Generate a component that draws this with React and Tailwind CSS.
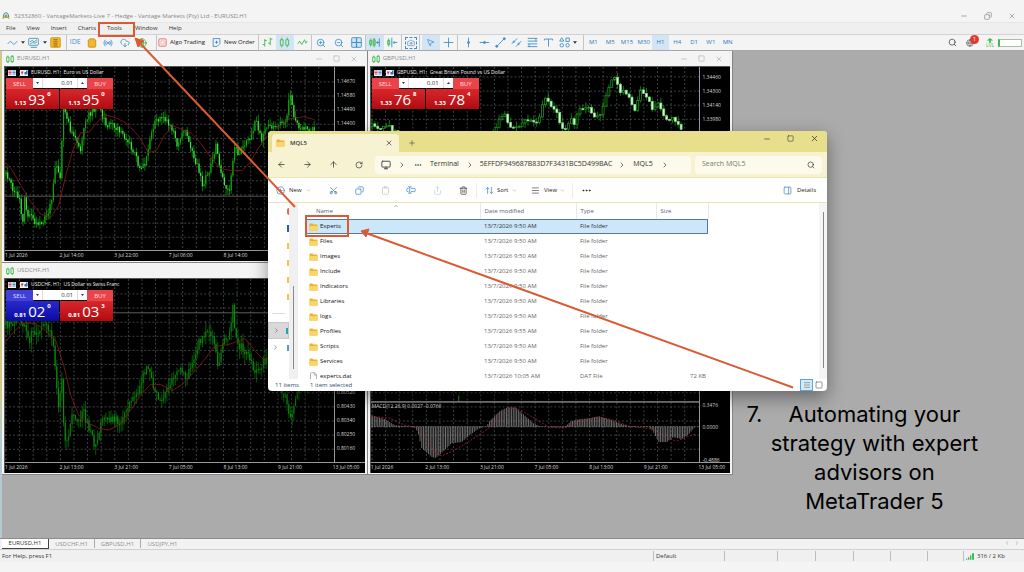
/**
 * Trading terminal desktop
 * Chart windows, a file explorer on top and the tutorial call-outs
 */

import {
  ArrowLeft, ArrowRight, ArrowUp, ArrowDownUp, Camera, ChevronDown, ChevronRight, ChevronUp, CirclePlus,
  Clipboard, CloudDownload, Copy, Ellipsis, File, Globe, Menu, Minus, Monitor, MousePointer2,
  PanelRight, Plus, Radio, RotateCw, Scissors, Search, Share, ShoppingBag, Square, TextCursorInput,
  Trash2, X, ZoomIn, ZoomOut,
} from 'lucide-react'

const T = {
  blue: '#3f8fcb',
  green: '#3fb950',
  grid: '#4f5358',
  ma: '#8e1a1a',
  orange: '#d95b33',
}

// Price tracks, in plot coordinates (330 x 184)
const EURUSD = {
  price: [[0, 108], [5, 115], [9, 124], [13, 130], [16, 140], [17, 168], [20, 128], [22, 146], [27, 152], [31, 156], [36, 158], [41, 150], [46, 139], [51, 95], [56, 116], [58, 40], [62, 48], [66, 68], [70, 70], [76, 84], [80, 54], [86, 46], [92, 38], [96, 44], [101, 58], [108, 59], [116, 64], [124, 74], [132, 92], [136, 102], [140, 98], [146, 69], [150, 56], [156, 53], [162, 54], [168, 64], [174, 80], [180, 60], [186, 79], [193, 100], [198, 118], [204, 108], [208, 90], [212, 80], [215, 99], [218, 112], [223, 124], [226, 122], [229, 90], [231, 74], [234, 90], [241, 75], [246, 76], [252, 50], [254, 64], [258, 74], [262, 62], [282, 54], [286, 26], [288, 38], [292, 58], [300, 62], [311, 63]],
  ma: [[0, 96], [6, 102], [16, 119], [26, 136], [36, 148], [46, 151], [54, 139], [61, 109], [68, 84], [76, 66], [84, 66], [92, 56], [100, 48], [111, 51], [121, 56], [134, 69], [144, 86], [152, 84], [160, 69], [168, 59], [176, 62], [186, 66], [196, 76], [206, 90], [216, 102], [226, 104], [238, 104], [246, 96], [254, 82], [264, 69], [286, 52], [300, 50], [311, 53]],
}

const GBPUSD = {
  price: [[0, 60], [5, 61], [9, 65], [15, 60], [21, 62], [29, 66], [40, 80], [70, 110], [110, 90], [124, 68], [129, 52], [135, 50], [141, 62], [147, 60], [153, 54], [161, 56], [169, 54], [173, 30], [177, 37], [185, 40], [189, 56], [195, 64], [201, 49], [203, 59], [209, 44], [215, 41], [221, 44], [227, 52], [233, 39], [237, 26], [240, 12], [244, 9], [247, 19], [253, 26], [259, 32], [265, 42], [271, 24], [277, 29], [283, 44], [287, 34], [293, 49], [299, 54], [304, 53], [312, 66]],
}

const USDCHF = {
  price: [[0, 47], [8, 43], [14, 36], [21, 50], [24, 66], [28, 49], [34, 56], [41, 46], [46, 58], [50, 78], [53, 128], [56, 110], [58, 85], [59, 160], [63, 164], [66, 142], [70, 138], [76, 138], [78, 127], [82, 145], [88, 157], [89, 172], [94, 152], [101, 142], [111, 140], [116, 150], [121, 134], [128, 122], [136, 107], [142, 86], [146, 98], [151, 116], [156, 123], [162, 109], [168, 100], [174, 90], [182, 97], [188, 87], [194, 66], [200, 56], [204, 48], [210, 66], [214, 86], [218, 68], [224, 58], [227, 46], [229, 24], [231, 56], [236, 67], [244, 77], [252, 97], [258, 86], [264, 76], [281, 118], [288, 141], [292, 122], [298, 112], [308, 100]],
  ma: [[0, 64], [8, 54], [18, 44], [31, 45], [41, 52], [51, 62], [59, 87], [66, 117], [74, 137], [84, 145], [94, 150], [104, 152], [114, 147], [126, 132], [136, 117], [146, 106], [156, 106], [168, 112], [178, 106], [191, 92], [201, 80], [210, 68], [224, 66], [241, 60], [251, 72], [258, 80], [266, 80]],
}

const MACD = {
  bars: [[0, 137], [14, 141], [24, 147], [34, 148], [44, 149], [47, 154], [51, 170], [61, 179], [65, 180], [74, 172], [81, 165], [91, 164], [99, 157], [109, 150], [116, 148], [119, 143], [129, 133], [137, 129], [145, 129], [153, 136], [163, 145], [169, 148], [184, 149], [194, 149], [201, 143], [209, 141], [219, 140], [229, 138], [239, 141], [249, 145], [259, 148], [279, 149], [283, 153], [289, 164], [297, 164], [303, 159], [312, 161], [319, 156], [325, 149]],
  signal: [[0, 138], [19, 140], [34, 147], [44, 149], [54, 159], [64, 174], [71, 178], [84, 172], [99, 163], [114, 153], [129, 141], [139, 130], [149, 131], [164, 140], [179, 149], [194, 150], [209, 143], [229, 139], [244, 142], [259, 148], [284, 151], [297, 160], [307, 163], [319, 158], [326, 156]],
}

const FILES = [
  ['Experts', '13/7/2026 9:50 AM', 'File folder', ''],
  ['Files', '13/7/2026 9:50 AM', 'File folder', ''],
  ['Images', '13/7/2026 9:50 AM', 'File folder', ''],
  ['Include', '13/7/2026 9:50 AM', 'File folder', ''],
  ['Indicators', '13/7/2026 9:50 AM', 'File folder', ''],
  ['Libraries', '13/7/2026 9:50 AM', 'File folder', ''],
  ['logs', '13/7/2026 9:50 AM', 'File folder', ''],
  ['Profiles', '13/7/2026 9:55 AM', 'File folder', ''],
  ['Scripts', '13/7/2026 9:50 AM', 'File folder', ''],
  ['Services', '13/7/2026 9:50 AM', 'File folder', ''],
  ['experts.dat', '13/7/2026 10:05 AM', 'DAT File', '72 KB'],
]

const DATES = ['1 Jul 2026', '2 Jul 13:00', '3 Jul 21:00', '7 Jul 05:00', '8 Jul 13:00', '9 Jul 21:00', '13 Jul 05:00']

function valueAt(points, x) {
  for (let i = 1; i < points.length; i++) {
    const [x0, y0] = points[i - 1]
    const [x1, y1] = points[i]
    if (x <= x1) return y0 + ((y1 - y0) * (x - x0)) / (x1 - x0)
  }
  return points[points.length - 1][1]
}

// Small seeded generator, so candles are the same on every render
function seeded(seed) {
  let s = seed
  return () => {
    s = (s * 16807) % 2147483647
    return s / 2147483647
  }
}

function makeCandles(points, step, seed, noise) {
  const rnd = seeded(seed)
  const end = points[points.length - 1][0]
  const out = []
  let open = points[0][1]
  for (let x = 1; x <= end; x += step) {
    const close = valueAt(points, x) + (rnd() - 0.5) * noise
    const top = Math.min(open, close)
    const bottom = Math.max(open, close)
    out.push({ x, top, bottom, high: top - rnd() * noise, low: bottom + rnd() * noise, up: close < open })
    open = close
  }
  return out
}

const toPoints = (list) => list.map((p) => p.join(',')).join(' ')

/* ---------- Charts ---------- */

function Grid({ offset = 15 }) {
  const cols = Array.from({ length: 24 }, (_, i) => 1 + i * 13.65)
  const rows = Array.from({ length: 13 }, (_, i) => offset + i * 14.2)
  return (
    <g stroke={T.grid} strokeWidth="0.8" strokeDasharray="2 2">
      {cols.map((x) => <line key={x} x1={x} x2={x} y1="0" y2="184" />)}
      {rows.map((y) => <line key={y} x1="0" x2="330" y1={y} y2={y} />)}
    </g>
  )
}

function ThinCandles({ points, seed, line, body, noise }) {
  return makeCandles(points, 1.7, seed, noise).map((c) => (
    <g key={c.x}>
      <line x1={c.x} x2={c.x} y1={c.high} y2={c.low} stroke={line} strokeWidth="0.7" />
      <rect x={c.x - 0.6} y={c.top} width="1.2" height={Math.max(1, c.bottom - c.top)} fill={c.up ? line : body} />
    </g>
  ))
}

function WideCandles({ points, seed }) {
  return makeCandles(points, 2.9, seed, 6).map((c) => (
    <g key={c.x} stroke="#1fa51f" strokeWidth="0.7">
      <line x1={c.x} x2={c.x} y1={c.high} y2={c.low} />
      <rect x={c.x - 1} y={c.top} width="2" height={Math.max(1, c.bottom - c.top)} fill={c.up ? '#000' : '#d9ffd9'} stroke={c.up ? '#1fa51f' : '#7fdc7f'} />
    </g>
  ))
}

function MacdPlot() {
  const xs = Array.from({ length: 192 }, (_, i) => i * 1.7)
  return (
    <g>
      <path d="M88 117v6" stroke="#157a15" strokeWidth="1.4" />
      <rect x="0" y="123" width="330" height="1.2" fill="#b5b5b5" />
      <line x1="0" x2="330" y1="148.5" y2="148.5" stroke="#777" strokeWidth="0.8" strokeDasharray="2 1" />
      {xs.map((x) => (
        <line key={x} x1={x} x2={x} y1="148.5" y2={valueAt(MACD.bars, x)} stroke="#8b8b8b" strokeWidth="0.8" />
      ))}
      <polyline points={toPoints(MACD.signal)} fill="none" stroke="#b3202c" strokeWidth="0.8" strokeDasharray="2 1.5" />
    </g>
  )
}

function CandleIcon() {
  return (
    <svg viewBox="0 0 12 12" className="w-2 h-2 shrink-0" fill="none" stroke={T.green} strokeWidth="1.4">
      <path d="M1 3h3.5v7H1zM7.5 2H11v8H7.5zM2.8 1v2M9.3 0v2M2.8 10v2M9.3 10v2" />
    </svg>
  )
}

function DepthIcons() {
  return (
    <>
      <svg viewBox="0 0 16 12" className="w-2 h-1.5 shrink-0">
        <rect width="16" height="12" fill="#e8f1fa" />
        <path d="M1 2h6M1 5h6M1 8h6" stroke="#d95050" strokeWidth="2" />
        <path d="M9 2h6M9 5h6M9 8h6" stroke="#4c8fd0" strokeWidth="2" />
      </svg>
      <svg viewBox="0 0 16 12" className="w-2 h-1.5 ml-1 shrink-0">
        <rect width="16" height="12" fill="#f5f5f5" />
        <path d="M2 3l5 0-3 7z" fill="#c33" />
        <path d="M9 9V4h3V1h3v8z" fill="#2f6fb8" />
      </svg>
    </>
  )
}

function Quote({ base, big, pip, className }) {
  return (
    <button className={`flex-1 h-[20px] flex items-end justify-center pb-[3px] text-white leading-none ${className}`}>
      <span className="text-[6px] font-bold mr-0.5">{base}</span>
      <span className="text-[15px] leading-[13px]">{big}</span>
      <span className="text-[6px] font-bold self-start mt-[2px] ml-0.5">{pip}</span>
    </button>
  )
}

function TradePanel({ symbol, sell, buy, blue }) {
  const red = 'bg-linear-to-b from-[#d9262b] to-[#b00a10]'
  return (
    <div className="absolute left-px top-[11px] w-[107px]">
      <div className="flex h-[11px] text-[6px] leading-none text-white/80">
        <button className={`w-[27px] ${blue ? 'bg-[#4040d8]' : 'bg-[#e8444a]'}`}>SELL</button>
        <div className="flex-1 h-[10px] flex bg-white text-[#333]">
          <button aria-label="Decrease volume" className="w-[10px] grid place-items-center border-r border-[#ddd]">
            <Caret small />
          </button>
          <input aria-label={`${symbol} volume`} defaultValue="0.01" className="w-0 flex-1 text-right pr-1 text-[6px] text-[#333] outline-none" />
          <button aria-label="Increase volume" className="w-[10px] grid place-items-center border-l border-[#ddd]">
            <Caret small up={!blue} />
          </button>
        </div>
        <button className="w-[26px] bg-[#e8444a]">BUY</button>
      </div>
      <div className="flex gap-px">
        <Quote {...sell} className={blue ? 'bg-linear-to-b from-[#2828cc] to-[#0a0aa0]' : red} />
        <Quote {...buy} className={red} />
      </div>
    </div>
  )
}

function ChartWindow({ symbol, title, labels, labelClass, dates, children, panel }) {
  return (
    <section className="min-w-0 bg-[#f4f4f4] px-0.5 pb-px border-r border-b border-[#858585]">
      <header className="h-[15px] flex items-center px-0.5 text-[6px] text-[#8a8a8a]">
        <CandleIcon />
        <h2 className="ml-[3px] flex-1">{symbol},H1</h2>
        <div className="flex gap-[10px] pr-[5px] text-[#b0b0b0]">
          <button aria-label={`Minimise ${symbol}`}><Minus size={8} /></button>
          <button aria-label={`Maximise ${symbol}`}><Square size={7} /></button>
          <button aria-label={`Close ${symbol}`}><X size={8} /></button>
        </div>
      </header>
      <div className="relative bg-black border-t border-l border-[#555]">
        <div className="flex h-[183px]">
          <svg viewBox="0 0 330 184" preserveAspectRatio="none" className="flex-1 min-w-0 h-full">
            {children}
          </svg>
          <div className={`w-[31px] shrink-0 border-l border-[#999] pl-0.5 flex flex-col text-[5px] text-[#d6d6d6] ${labelClass}`}>
            {labels.map((l) => <span key={l} className="h-[14px] shrink-0 leading-[14px]">{l}</span>)}
          </div>
        </div>
        <div className="h-[11px] flex border-t border-[#999] text-[5px] leading-[9px] text-[#dcdcdc] whitespace-nowrap">
          <div className="flex-1 grid grid-cols-6">
            {dates.slice(0, 6).map((d) => <span key={d}>{d}</span>)}
          </div>
          <span className="w-[32px]">{dates[6]}</span>
        </div>
        {title && (
          <div className="absolute left-[3px] top-[2px] flex items-center text-[5px] leading-[7px] text-[#ececec]">
            <DepthIcons />
            <span className="ml-[3px] whitespace-pre">{title}</span>
          </div>
        )}
        {panel}
      </div>
    </section>
  )
}

/* ---------- Terminal chrome ---------- */

function Caret({ up, small }) {
  return (
    <svg viewBox="0 0 6 4" className={`shrink-0 ${small ? 'w-[3px] h-[2px]' : 'w-1 h-[3px]'}`} fill="#333">
      <path d={up ? 'M0 4h6L3 0z' : 'M0 0h6L3 4z'} />
    </svg>
  )
}

function ToolIcon({ children, className = 'w-[11px] h-[11px]' }) {
  return (
    <svg viewBox="0 0 16 16" className={className} fill="none" stroke={T.blue} strokeWidth="1.3">
      {children}
    </svg>
  )
}

function Tool({ label, active, children }) {
  return (
    <button aria-label={label} className={`flex-1 h-[15px] grid place-items-center ${active ? 'bg-[#d3e5f4]' : ''}`}>
      {children}
    </button>
  )
}

function Group({ className, children }) {
  return <div className={`flex items-center shrink-0 h-[15px] border-r border-[#c4c4c4] ${className}`}>{children}</div>
}

function Toolbar() {
  return (
    <div className="h-[17px] flex items-center border-t border-b border-t-[#d2d2d2] border-b-[#a8a8a8] bg-[#f4f4f4] text-[6px] text-[#222] whitespace-nowrap pl-[4px]">
      <Group className="w-[63px] pr-0.5">
        <Tool label="Line chart"><ToolIcon><path d="M1 10l4-4 5 5 5-5" /></ToolIcon></Tool>
        <Caret />
        <Tool label="Templates">
          <ToolIcon><rect x="1" y="2" width="14" height="10" rx="1" /><path d="M3 7l3-2 3 2 4-3M4 15h9" /><path d="M3 10l4-2 3 1 3-2" stroke={T.green} /></ToolIcon>
        </Tool>
        <Caret />
        <Tool label="Market watch">
          <ToolIcon><rect x="1" y="1" width="14" height="14" rx="1" fill="#f2b632" stroke="#d79a12" /><path d="M5 4h6M5 7h6M5 10h6M5 13h6" stroke="#8a6200" /></ToolIcon>
        </Tool>
      </Group>
      <Group className="w-[90px] pr-1.5">
        <Tool label="MetaEditor"><span className="text-[7px] text-[#3f8fcb]">IDE</span></Tool>
        <Tool label="Market"><ShoppingBag size={10} color="#c58a10" fill="#f2b632" /></Tool>
        <Tool label="Signals"><Radio size={10} color={T.blue} /></Tool>
        <Tool label="VPS"><CloudDownload size={10} color={T.blue} /></Tool>
        <Tool label="Community"><Globe size={10} color={T.green} /></Tool>
      </Group>
      <Group className="w-[102px] pl-px">
        <button className="flex items-center gap-[3px] w-[54px]">
          <ToolIcon className="w-[9px] h-[9px] shrink-0"><rect x="1.5" y="1.5" width="13" height="13" rx="2" stroke="#e46a5e" strokeWidth="1.6" /><path d="M5 5h6v6H5z" stroke="#f0aaa2" /></ToolIcon>
          Algo Trading
        </button>
        <button className="flex items-center gap-[3px]">
          <ToolIcon className="w-[9px] h-[9px] shrink-0"><path d="M2 1h12v9l-5 5H2z" strokeWidth="1.6" /><path d="M8 5v5M5.5 7.5h5" stroke="#2f7fc0" strokeWidth="1.6" /></ToolIcon>
          New Order
        </button>
      </Group>
      <Group className="w-[53px]">
        <Tool label="Bars"><ToolIcon><path d="M4 3v11M1 11h3M4 5h3M12 1v11M9 9h3M12 3h3" stroke={T.green} /></ToolIcon></Tool>
        <Tool label="Candles" active><ToolIcon><path d="M2 4h4v8H2zM10 4h4v8h-4zM4 1v3M12 1v3M4 12v3M12 12v3" stroke={T.green} /></ToolIcon></Tool>
        <Tool label="Line"><ToolIcon><path d="M1 10l3-4 3 5 4-7 2 5 2-3" stroke={T.green} /></ToolIcon></Tool>
      </Group>
      <Group className="w-[54px]">
        <Tool label="Zoom in"><ZoomIn size={10} color={T.blue} /></Tool>
        <Tool label="Zoom out"><ZoomOut size={10} color={T.blue} /></Tool>
        <Tool label="Tile windows">
          <ToolIcon><rect x="1" y="1" width="14" height="14" rx="1" fill="#d3e5f4" /><path d="M8 1v14M1 8h14" strokeWidth="1.8" /></ToolIcon>
        </Tool>
      </Group>
      <Group className="w-[36px]">
        <Tool label="Auto scroll" active><ToolIcon><path d="M1 5h3v6H1zM6 4h3v8H6zM2.5 2v3M7.5 1v3M2.5 11v3M7.5 12v3" stroke={T.green} fill="#8fd69a" /><path d="M15 2v12M10 8h4M12 6l2 2-2 2" /></ToolIcon></Tool>
        <Tool label="Chart shift"><ToolIcon><path d="M1 5h3v6H1zM2.5 2v3M2.5 11v3" stroke={T.green} fill="#8fd69a" /><path d="M7 1v14M15 8H9M11 6L9 8l2 2" /></ToolIcon></Tool>
      </Group>
      <Group className="w-[18px]">
        <Tool label="Screenshot">
          <span className="grid place-items-center border border-dashed border-[#3f8fcb] w-3 h-3"><Camera size={8} color={T.blue} /></span>
        </Tool>
      </Group>
      <Group className="w-[38px] pl-0.5">
        <Tool label="Cursor" active><MousePointer2 size={9} color={T.blue} /></Tool>
        <Tool label="Crosshair"><ToolIcon><path d="M8 1v14M1 8h14" /></ToolIcon></Tool>
      </Group>
      <Group className="w-[126px] pl-0.5 pr-1.5">
        <Tool label="Vertical line"><ToolIcon><path d="M8 1v14" /><circle cx="8" cy="8" r="1.5" fill={T.blue} /></ToolIcon></Tool>
        <Tool label="Horizontal line"><ToolIcon><path d="M1 8h14" /><circle cx="8" cy="8" r="1.5" fill={T.blue} /></ToolIcon></Tool>
        <Tool label="Trend line"><ToolIcon><path d="M2 14L14 2" /><circle cx="2.5" cy="13.5" r="1.5" fill={T.blue} /><circle cx="13.5" cy="2.5" r="1.5" fill={T.blue} /></ToolIcon></Tool>
        <Tool label="Channel"><ToolIcon><path d="M1 10l8-8M7 14l8-8" /><circle cx="4" cy="7" r="1" /><circle cx="11" cy="10" r="1" /></ToolIcon></Tool>
        <Tool label="Fibonacci"><ToolIcon><path d="M1 2h14M1 6h14M1 10h14M1 14h14M3 10v4M13 2v4" /></ToolIcon></Tool>
        <Tool label="Text"><ToolIcon><path d="M2 5V3h12v2M8 3v11" /></ToolIcon></Tool>
        <Tool label="Shapes"><ToolIcon><path d="M1 6l3-5 3 5zM10 1.5h5v5h-5z" /><circle cx="4" cy="12" r="2.5" /><circle cx="12.5" cy="12" r="2.5" /></ToolIcon></Tool>
        <Caret />
      </Group>
      <div className="flex shrink-0 w-[152px] pl-px text-[#2f78b4]">
        {['M1', 'M5', 'M15', 'M30', 'H1', 'H4', 'D1', 'W1', 'MN'].map((tf) => (
          <button key={tf} className={`flex-1 basis-0 min-w-0 h-[15px] ${tf === 'H1' ? 'bg-[#d3e5f4]' : ''}`}>{tf}</button>
        ))}
      </div>
      <div className="ml-auto flex items-center pr-0.5">
        <button aria-label="Search" className="mr-[9px]"><Search size={9} color="#444" /></button>
        <button aria-label="Notifications" className="relative w-[14px] mr-[5px]">
          <Globe size={8} color="#555" />
          <span className="absolute left-1 -top-1 w-[9px] h-[9px] rounded-full bg-[#e0392d] text-white text-[6px] leading-[9px]">1</span>
        </button>
        <div className="w-[10px] mr-[3px] flex flex-col items-center text-[#3fb950]">
          <svg viewBox="0 0 10 6" className="w-[8px] h-[5px]" fill={T.green}><path d="M5 0l4 3H6v3H4V3H1z" /></svg>
          <span className="text-[5px] leading-[5px]">LVL</span>
        </div>
        <div className="w-[24px] h-2 border border-[#a9bfa9] border-l-2 border-l-[#3fb950] bg-white" />
      </div>
    </div>
  )
}

function TitleBar() {
  return (
    <header className="bg-[#f4f4f4] pt-2.5">
      <div className="h-[13px] flex items-center pl-[2px] text-[6px] text-[#868686] border-b border-[#e6e6e6]">
        <svg viewBox="0 0 12 12" className="w-2 h-2 mr-1" fill="none" strokeWidth="1.6">
          <path d="M2 8c0-4 2-7 4-7s4 3 4 7" stroke="#4d7d9c" />
          <path d="M1 10c2-3 8-3 10 0" stroke="#d2a32b" strokeWidth="2" />
          <circle cx="6" cy="6" r="1.5" stroke="#5aa469" />
        </svg>
        <h1 className="flex-1">32332860 - VantageMarkets-Live 7 - Hedge - Vantage Markets (Pty) Ltd - EURUSD,H1</h1>
        <div className="flex gap-4 pr-2">
          <button aria-label="Minimise terminal"><Minus size={8} /></button>
          <button aria-label="Restore terminal"><Copy size={8} className="rotate-90" /></button>
          <button aria-label="Close terminal"><X size={8} /></button>
        </div>
      </div>
      <nav className="h-[11px] flex items-center gap-[11px] pl-[6px] bg-[#efefef] text-[6px] text-[#333]">
        <button>File</button>
        <button>View</button>
        <button>Insert</button>
        <button>Charts</button>
        <button className="mr-0.5">Tools</button>
        <button>Window</button>
        <button>Help</button>
      </nav>
    </header>
  )
}

function ChartTabs() {
  return (
    <div className="h-3 flex items-start bg-[#f2f2f2] border-t border-b border-t-[#8c8c8c] border-b-[#d0d0d0] pl-0.5 text-[6px] text-[#909090]">
      <button className="w-[47px] h-[10px] bg-white border-r border-b border-[#444] text-[#333] leading-[9px]">EURUSD,H1</button>
      <button className="w-[46px] h-[9px] border-r border-[#aaa] leading-[10px]">USDCHF,H1</button>
      <button className="w-[46px] h-[9px] border-r border-[#aaa] leading-[10px]">GBPUSD,H1</button>
      <button className="w-[43px] h-[9px] leading-[10px]">USDJPY,H1</button>
      <div className="ml-auto flex gap-1 pr-1 pt-px text-[#888]">
        <button aria-label="Previous chart"><ChevronRight size={6} className="rotate-180" /></button>
        <button aria-label="Next chart"><ChevronRight size={6} /></button>
      </div>
    </div>
  )
}

function StatusBar() {
  const cell = 'h-[10px] border-l border-[#bdbdbd]'
  return (
    <footer className="bg-[#f4f4f4] pb-2.5">
      <div className="h-3 flex items-center bg-[#f0f0f0] text-[6px] text-[#333]">
        <span className="flex-1 pl-0.5">For Help, press F1</span>
        <span className={`w-[71px] pl-0.5 leading-[10px] ${cell}`}>Default</span>
        <span className={`w-[53px] ${cell}`} />
        <span className={`w-[38px] ${cell}`} />
        <span className={`w-[38px] ${cell}`} />
        <span className={`w-[37px] ${cell}`} />
        <span className={`w-[37px] ${cell}`} />
        <span className={`w-[36px] ${cell}`} />
        <span className={`w-[61px] flex items-center gap-[3px] pl-0.5 ${cell}`}>
          <svg viewBox="0 0 12 10" className="w-2 h-[7px]" fill={T.green}>
            <path d="M0 8h2v2H0zM3 6h2v4H3zM6 3h2v7H6zM9 0h3v10H9z" />
          </svg>
          316 / 2 Kb
        </span>
      </div>
    </footer>
  )
}

/* ---------- File explorer ---------- */

function Folder({ className = 'w-[9px] h-2' }) {
  return (
    <svg viewBox="0 0 18 16" className={`shrink-0 ${className}`}>
      <path d="M1 2.5Q1 1 2.500 1H7l2 2h7q1 0 1 1v10q0 1-1 1H2q-1 0-1-1z" fill="#eeb02e" />
      <path d="M1 6h16v8q0 1-1 1H2q-1 0-1-1z" fill="#fbd667" />
    </svg>
  )
}

function Action({ label, className = '', children }) {
  return <button aria-label={label} className={`w-[26px] shrink-0 grid place-items-center ${className}`}>{children}</button>
}

function ExplorerTabs() {
  return (
    <div className="h-[21px] flex items-end bg-[#e8df8c] pl-1">
      <div className="w-[127px] h-[18px] flex items-center bg-[#f7f3d2] rounded-t pl-1 pr-1.5 text-[6px] font-semibold text-[#333]">
        <Folder />
        <span className="ml-[5px] flex-1">MQL5</span>
        <button aria-label="Close tab"><X size={8} /></button>
      </div>
      <button aria-label="New tab" className="ml-[9px] mb-[5px]"><Plus size={8} color="#555" /></button>
      <div className="ml-auto self-start h-[15px] flex items-center gap-[16px] pr-[8px] text-[#333]">
        <button aria-label="Minimise"><Minus size={8} /></button>
        <button aria-label="Maximise"><Square size={7} /></button>
        <button aria-label="Close"><X size={9} /></button>
      </div>
    </div>
  )
}

function AddressRow() {
  return (
    <div className="h-[26px] flex items-center bg-[#f7f3d2] border-b border-[#ebe5b0] text-[7px] text-[#333] pr-[5px]">
      <Action label="Back"><ArrowLeft size={9} /></Action>
      <Action label="Forward"><ArrowRight size={9} /></Action>
      <Action label="Up"><ArrowUp size={9} /></Action>
      <Action label="Refresh"><RotateCw size={8} /></Action>
      <div className="flex-1 h-[18px] flex items-center bg-[#fcfaeb] rounded-sm ml-[3px] pl-[6px]">
        <Monitor size={10} />
        <ChevronRight size={8} className="ml-[7px]" />
        <Ellipsis size={8} className="ml-2" />
        <a href="#terminal" className="ml-2">Terminal</a>
        <ChevronRight size={8} className="ml-[7px] mr-[6px]" />
        <a href="#instance">5EFFDF949687B83D7F3431BC5D499BAC</a>
        <ChevronRight size={8} className="ml-[6px] mr-[7px]" />
        <a href="#mql5">MQL5</a>
        <ChevronRight size={8} className="ml-2" />
      </div>
      <div className="w-[127px] h-[18px] flex items-center bg-[#fcfaeb] rounded-sm ml-1 px-[7px]">
        <input aria-label="Search MQL5" placeholder="Search MQL5" className="w-0 flex-1 bg-transparent text-[7px] placeholder:text-[#777] outline-none" />
        <Search size={8} />
      </div>
    </div>
  )
}

function CommandBar() {
  return (
    <div className="h-[25px] flex items-center border-b border-[#ebe5b0] text-[6px] text-[#222] pl-[8px] pr-[11px]">
      <button className="flex items-center w-[44px]">
        <CirclePlus size={9} color="#5a7f9c" />
        <span className="ml-1">New</span>
        <ChevronDown size={5} className="ml-1" color="#888" />
      </button>
      <Action label="Cut"><Scissors size={9} color="#4a7ea6" className="-rotate-90" /></Action>
      <Action label="Copy"><Copy size={9} color="#4a8cbf" className="-scale-x-100" /></Action>
      <Action label="Paste"><Clipboard size={9} color="#bcc8d2" /></Action>
      <Action label="Rename"><TextCursorInput size={10} color="#3f8fcb" /></Action>
      <Action label="Share"><Share size={9} color="#bcd3e6" /></Action>
      <Action label="Delete"><Trash2 size={9} color="#444" /></Action>
      <button className="h-[15px] flex items-center w-[49px] border-l border-[#ececec] pl-2">
        <ArrowDownUp size={9} color="#4a8cbf" className="-scale-x-100" />
        <span className="ml-[3px]">Sort</span>
        <ChevronDown size={5} className="ml-[3px]" color="#888" />
      </button>
      <button className="h-[15px] flex items-center w-[48px] border-r border-[#ececec] pl-1.5">
        <Menu size={9} color="#555" />
        <span className="ml-1">View</span>
        <ChevronDown size={5} className="ml-[3px]" color="#888" />
      </button>
      <Action label="More"><Ellipsis size={11} /></Action>
      <button className="ml-auto flex items-center gap-[5px]">
        <PanelRight size={9} color="#4a8cbf" />
        Details
      </button>
    </div>
  )
}

function NavPane() {
  return (
    <div className="w-[30px] shrink-0 flex">
      <div className="w-[21px] flex flex-col">
        <span className="h-[17px] flex items-center justify-end"><i className="w-0.5 h-[7px] rounded-l-full bg-[#e36a55]" /></span>
        <span className="h-[17px] flex items-center justify-end"><i className="w-0.5 h-[7px] bg-[#3355bb]" /></span>
        {[0, 1, 2, 3].map((i) => (
          <span key={i} className="h-[17px] flex items-center justify-end"><i className="w-0.5 h-[6px] bg-[#f5c64c]" /></span>
        ))}
        <span className="h-[17px] flex items-center px-1"><i className="w-full h-px bg-[#ddd]" /></span>
        <button aria-label="This PC" className="h-[17px] flex items-center justify-between pl-1 bg-[#d9d9d9] border border-[#c6c6c6]">
          <ChevronRight size={7} color="#555" /><i className="w-0.5 h-[6px] bg-[#2d9fb4]" />
        </button>
        <button aria-label="Network" className="h-[17px] flex items-center justify-between pl-1">
          <ChevronRight size={7} color="#555" /><i className="w-0.5 h-[6px] bg-[#4f9bd8]" />
        </button>
      </div>
      <div className="w-[9px] bg-[#f0f0f0] flex justify-center pt-[83px]">
        <i className="w-px h-[83px] bg-[#8a8a8a]" />
      </div>
    </div>
  )
}

function FileTable() {
  return (
    <div className="flex-1 min-w-0 flex pl-2 overflow-hidden">
      <table className="table-fixed w-[402px] self-start border-collapse text-left text-[6px] text-[#666]">
        <thead className="text-[#51647e]">
          <tr className="h-4">
            <th className="w-[174px] font-normal pl-[10px] p-0">
              <span className="relative block">
                Name
                <ChevronUp size={6} className="absolute left-[77px] -top-1" />
              </span>
            </th>
            <th className="w-[96px] font-normal p-0 pl-1 border-l border-[#e8e8e8]">Date modified</th>
            <th className="w-[80px] font-normal p-0 pl-1 border-l border-[#e8e8e8]">Type</th>
            <th className="w-[52px] font-normal p-0 pl-1 border-x border-[#e8e8e8]">Size</th>
          </tr>
        </thead>
        <tbody>
          {FILES.map(([name, date, type, size], i) => (
            <tr key={name} className={`h-[15px] ${i === 0 ? 'bg-[#cce6fa] outline outline-[#5c7890] -outline-offset-1 text-[#333]' : ''}`}>
              <td className="p-0 pl-[3px] text-[#111]">
                <span className="flex items-center gap-0.5">
                  {size ? <File size={9} color="#999" /> : <Folder />}
                  {name}
                </span>
              </td>
              <td className="p-0 pl-1">{date}</td>
              <td className="p-0 pl-1">{type}</td>
              <td className="p-0 pr-0.5 text-right">{size}</td>
            </tr>
          ))}
        </tbody>
      </table>
      <div className="ml-auto w-[8px] bg-[#f5f5f5] flex justify-center pt-[9px]">
        <i className="w-px h-[156px] bg-[#888]" />
      </div>
    </div>
  )
}

function Explorer() {
  return (
    <section className="absolute left-[268px] top-[80px] w-[559px] rounded overflow-hidden bg-white shadow-[0_6px_18px_rgba(0,0,0,0.4)]">
      <ExplorerTabs />
      <AddressRow />
      <CommandBar />
      <div className="h-[176px] flex">
        <NavPane />
        <FileTable />
      </div>
      <div className="h-3 flex items-center pl-[7px] pr-[4px] text-[6px] text-[#2f4a6c]">
        <span className="w-[35px]">11 items</span>
        <span className="flex-1">1 item selected</span>
        <button aria-label="Details view" className="w-[13px] h-3 grid place-items-center border border-[#5aa5d8] bg-[#d5eafa]">
          <Menu size={8} color="#777" />
        </button>
        <button aria-label="Large icons view" className="ml-0.5"><Square size={8} color="#666" /></button>
      </div>
    </section>
  )
}

/* ---------- Call-outs ---------- */

function Callouts() {
  return (
    <svg className="absolute inset-0 w-full h-full pointer-events-none" fill="none" stroke={T.orange} strokeWidth="2">
      <rect x="99" y="23" width="35" height="13" />
      <rect x="306" y="216" width="42" height="20" />
      <path d="M295 207L138 41M793 387.500L366 233" />
      <path d="M135 38l9 3-6 6zM361 231l8-2-3 8z" fill={T.orange} strokeWidth="1" />
    </svg>
  )
}

export default function App() {
  return (
    <div className="relative min-h-screen flex flex-col bg-[#ababab] overflow-hidden font-['Open_Sans','Noto_Sans',sans-serif]">
      <TitleBar />
      <Toolbar />

      <main className="relative flex-1 flex">
        {/* Tiled chart windows */}
        <div className="w-[2px] shrink-0 bg-linear-to-b from-[#cfc88a] from-70% to-[#b5c9d3] to-80%" />
        <div className="w-5/7 grid grid-cols-2 self-start">
          <ChartWindow
            symbol="EURUSD"
            title="EURUSD, H1:  Euro vs US Dollar"
            labels={['1.14670', '1.14580', '1.14490', '1.14400']}
            labelClass="pt-[7px]"
            dates={['1 Jul 2026', '2 Jul 14:00', '3 Jul 22:00', '7 Jul 06:00', '8 Jul 14:00']}
            panel={<TradePanel symbol="EURUSD" sell={{ base: '1.13', big: '93', pip: '6' }} buy={{ base: '1.13', big: '95', pip: '0' }} />}
          >
            <Grid />
            <line x1="0" x2="330" y1="130" y2="130" stroke="#666" strokeWidth="0.8" />
            <ThinCandles points={EURUSD.price} seed={71} line="#12a312" body="#4be04b" noise={7} />
            <polyline points={toPoints(EURUSD.ma)} fill="none" stroke={T.ma} strokeWidth="0.8" />
          </ChartWindow>

          <ChartWindow
            symbol="GBPUSD"
            title="GBPUSD, H1:  Great Britain Pound vs US Dollar"
            labels={['1.34460', '1.34300', '1.34140', '1.33980']}
            labelClass="pt-[3px]"
            dates={[]}
            panel={<TradePanel symbol="GBPUSD" sell={{ base: '1.33', big: '76', pip: '8' }} buy={{ base: '1.33', big: '78', pip: '4' }} />}
          >
            <Grid offset={10} />
            <WideCandles points={GBPUSD.price} seed={29} />
          </ChartWindow>

          <ChartWindow
            symbol="USDCHF"
            title="USDCHF, H1:  US Dollar vs Swiss Franc"
            labels={['0.80520', '0.80430', '0.80340', '0.80250', '0.80160']}
            labelClass="justify-end pb-[7px]"
            dates={DATES}
            panel={<TradePanel symbol="USDCHF" blue sell={{ base: '0.81', big: '02', pip: '0' }} buy={{ base: '0.81', big: '03', pip: '3' }} />}
          >
            <Grid />
            <line x1="0" x2="330" y1="34" y2="34" stroke="#777" strokeWidth="0.8" />
            <ThinCandles points={USDCHF.price} seed={113} line="#0b780b" body="#0d8a0d" noise={10} />
            <polyline points={toPoints(USDCHF.ma)} fill="none" stroke={T.ma} strokeWidth="0.8" />
          </ChartWindow>

          <ChartWindow
            symbol="USDJPY"
            labels={['0.3476', '0.0000', '-0.4886']}
            labelClass="pt-[119px] gap-y-2 [&>span:last-child]:mt-[11px]"
            dates={DATES}
            panel={<span className="absolute left-px top-[124px] text-[5px] leading-[7px] text-[#d6d6d6]">MACD(12,26,9) 0.0027 -0.0766</span>}
          >
            <Grid />
            <MacdPlot />
          </ChartWindow>
        </div>

        {/* Lesson caption */}
        <aside className="flex-1 flex flex-col justify-end pb-[22px] pl-[13px]">
          <div className="flex text-[22px] leading-[29px] text-black font-['Inter','Open_Sans',sans-serif] whitespace-nowrap">
            <span className="w-[22px]">7.</span>
            <p className="w-[212px] flex flex-col items-center">
              <span>Automating your</span>
              <span>strategy with expert</span>
              <span>advisors on</span>
              <span>MetaTrader 5</span>
            </p>
          </div>
        </aside>

        <Explorer />
      </main>

      <ChartTabs />
      <StatusBar />
      <Callouts />
    </div>
  )
}
